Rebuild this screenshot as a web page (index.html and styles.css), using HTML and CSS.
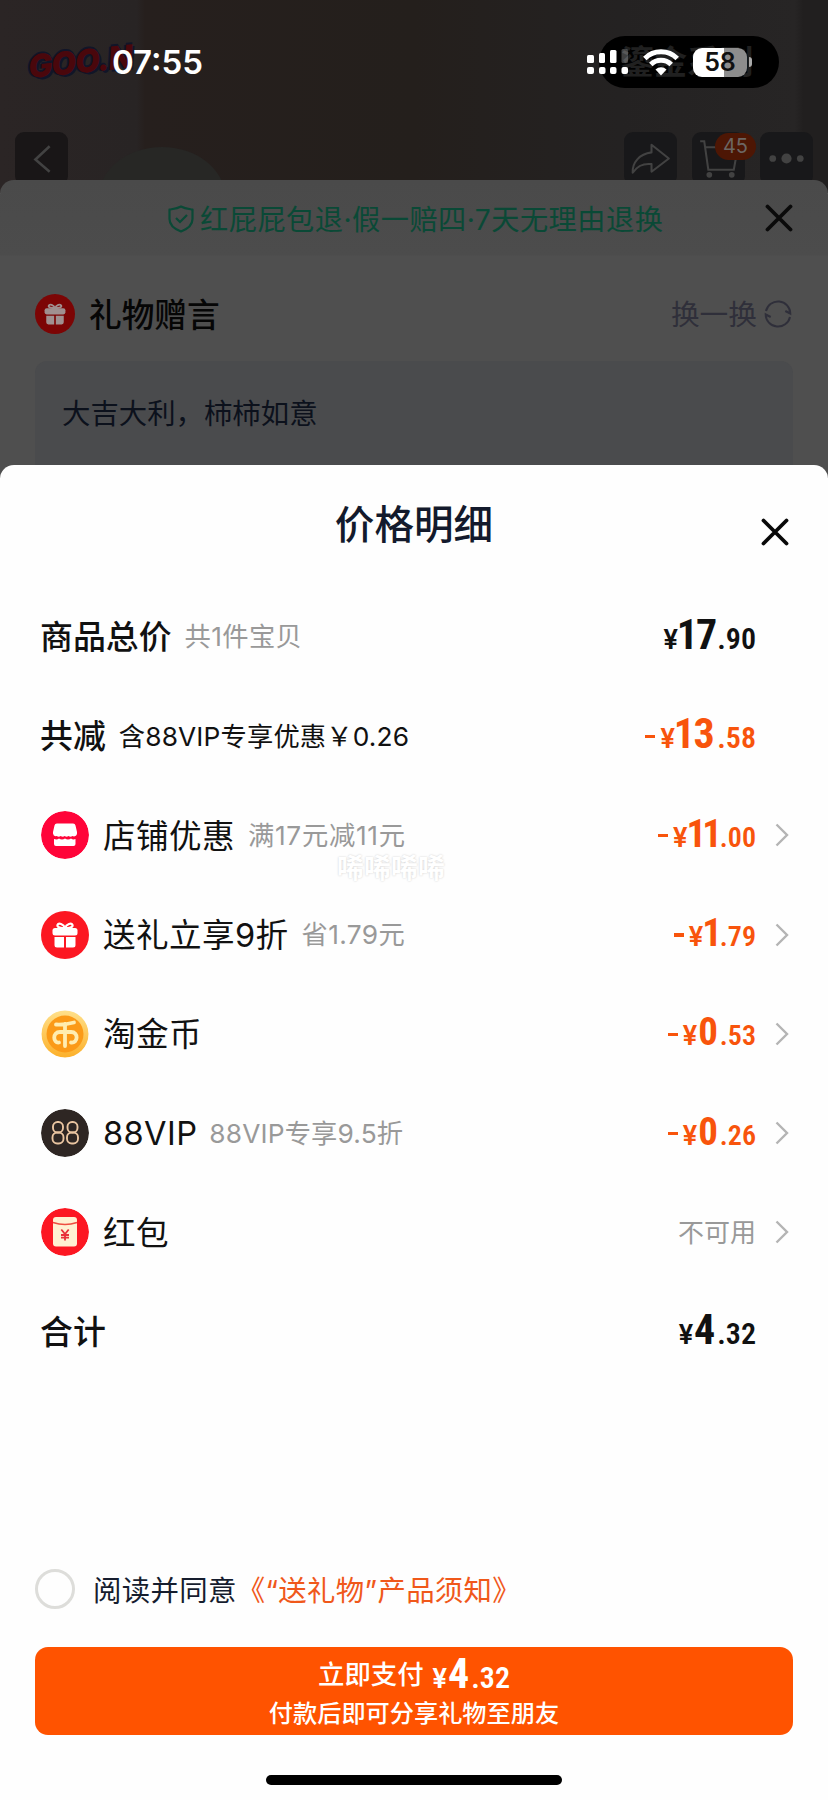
FILE: index.html
```html
<!DOCTYPE html>
<html lang="zh-CN">
<head>
<meta charset="utf-8">
<title>价格明细</title>
<link rel="stylesheet" href="styles.css">
</head>
<body>
<svg class="defs" width="0" height="0">
  <symbol id="gift" viewBox="0 0 48 48">
    <g fill="currentColor">
      <rect x="11.500" y="17" width="25" height="7.500" rx="2.500"/>
      <path d="M13.500 26H23v10.500h-7a2.500 2.500 0 0 1-2.500-2.500zM25 26h9.500v8a2.500 2.500 0 0 1-2.500 2.500h-7z"/>
    </g>
    <path d="M24 17c-1.500-4-6.500-5.500-7.500-3s4 3 7.500 3c3.500 0 8.500-.5 7.500-3S25.500 13 24 17z" fill="none" stroke="currentColor" stroke-width="2.200"/>
  </symbol>
  <symbol id="arrow" viewBox="0 0 14 24"><path d="M1.500 1.500 12 12 1.500 22.500" fill="none" stroke="#b4b4b4" stroke-width="2.400"/></symbol>
  <symbol id="cross" viewBox="0 0 28 28"><path d="M2.500 2.500l23 23M25.500 2.500l-23 23" fill="none" stroke="currentColor" stroke-width="3.800" stroke-linecap="round"/></symbol>
</svg>
<div class="screen">
  <header class="hero">
    <div class="brand">GOO.N</div>
    <div class="island"></div>
    <div class="hero-label">鎏金系列</div>
    <div class="status">
      <time class="clock">07:55</time>
      <div class="indicators">
        <svg class="signal" viewBox="0 0 42 26" width="42" height="26"><g fill="#fff"><rect x="0" y="6" width="7" height="8" rx="1.500"/><rect x="12" y="4" width="6" height="10" rx="1.500"/><rect x="23" y="1" width="6.500" height="13" rx="1.500"/><rect x="34.500" y="0" width="6.500" height="14" rx="1.500" opacity=".25"/><rect x="0" y="18" width="7" height="7" rx="2"/><rect x="12" y="18" width="6.500" height="7" rx="2"/><rect x="23" y="18" width="6.500" height="7" rx="2"/><rect x="34.500" y="18" width="6.500" height="7" rx="2"/></g></svg>
        <svg class="wifi" viewBox="0 0 36 27" width="36" height="27"><g fill="none" stroke="#fff" stroke-width="5"><path d="M1.800 9.500a23 23 0 0 1 32.400 0"/><path d="M7.800 15.500a14.500 14.500 0 0 1 20.400 0"/></g><path d="M18 26.500l-5.500-6a8 8 0 0 1 11 0z" fill="#fff"/></svg>
        <div class="battery"><span>58</span></div>
        <i class="battery-tip"></i>
      </div>
    </div>
    <div class="dome"></div>
    <nav class="tools">
      <div class="tool back"><svg viewBox="0 0 52 52"><path d="M34 14 20 27l14 12" fill="none" stroke="currentColor" stroke-width="2.500"/></svg></div>
      <div class="tool"><svg viewBox="0 0 52 52"><path d="M27 12.500 44 26 27 39v-7.500c-9-1-14 2-18.500 8.500C8 30 15 21.500 27 20z" fill="none" stroke="currentColor" stroke-width="2" stroke-linejoin="round"/></svg></div>
      <div class="tool"><svg viewBox="0 0 52 52"><g fill="none" stroke="currentColor" stroke-width="2"><path d="M8 9h4l4 28h25l4-22H13"/></g><circle cx="17" cy="42" r="2.800" fill="currentColor"/><circle cx="39" cy="42" r="2.800" fill="currentColor"/></svg><b class="count">45</b></div>
      <div class="tool"><svg viewBox="0 0 52 52"><g fill="currentColor"><circle cx="12.500" cy="26" r="3.300"/><circle cx="26" cy="26" r="5"/><circle cx="39.500" cy="26" r="3.300"/></g></svg></div>
    </nav>
  </header>
  <section class="order">
    <div class="promise">
      <svg viewBox="0 0 26 28" width="26" height="28"><path d="M13 1.500C9 4 5 4 1.500 4.500V14c0 6 5 10 11.500 12.500C19.500 24 24.500 20 24.500 14V4.500C21 4 17 4 13 1.500z" fill="none" stroke="currentColor" stroke-width="2.200" stroke-linejoin="round"/><path d="M8 13l4 4 7-7" fill="none" stroke="currentColor" stroke-width="2.200"/></svg>
      <span>红屁屁包退·假一赔四·7天无理由退换</span>
      <svg class="promise-close"><use href="#cross"/></svg>
    </div>
    <div class="wish-head">
      <svg class="wish-icon"><use href="#gift"/></svg>
      <h2>礼物赠言</h2>
      <span class="swap">换一换</span>
      <svg viewBox="0 0 28 28" width="28" height="28" class="refresh"><g fill="none" stroke="currentColor" stroke-width="2"><path d="M2 11A12.300 12.300 0 0 1 26.300 13.500l-5-2.500M26 17A12.300 12.300 0 0 1 1.700 14.500l5 2.500"/></g></svg>
    </div>
    <div class="wish">大吉大利，柿柿如意</div>
  </section>
  <main class="sheet">
    <div class="sheet-head"><h1>价格明细</h1><svg class="close"><use href="#cross"/></svg></div>
    <div class="rows">
      <div class="row"><strong>商品总价</strong><small>共1件宝贝</small><div class="price dark"><i>¥</i><b class="tight">17</b><em>.90</em></div></div>
      <div class="row"><strong>共减</strong><small class="black">含88VIP专享优惠￥0.26</small><div class="price"><u></u><i>¥</i><b class="tight cut">13</b><em>.58</em></div></div>
      <div class="row"><svg class="icon" viewBox="0 0 48 48"><circle cx="24" cy="24" r="24" fill="#ff0439"/><path d="M16 12.500h16a2.500 2.500 0 0 1 2.500 2L36 21v1.500a3 3 0 0 1-4.500 2.500q-2 1.500-4 0-2 1.500-3.800 0-2 1.500-4 0-2 1.500-4 0a3 3 0 0 1-3.700-2.500V21l1.500-6.500a2.500 2.500 0 0 1 2.500-2zM13 28q3 1 5-.5 3 2 6 0 3 2 6 0 2 1.500 4.500.5v5a2 2 0 0 1-2 2H15a2 2 0 0 1-2-2z" fill="#fff"/></svg><span>店铺优惠</span><small class="wide">满17元减11元</small><div class="price disc"><u></u><i>¥</i><b class="ones">11</b><em>.00</em></div><svg class="go"><use href="#arrow"/></svg></div>
      <div class="row"><svg class="icon gift"><use href="#gift"/></svg><span>送礼立享9折</span><small>省1.79元</small><div class="price disc"><u></u><i>¥</i><b class="ones">1</b><em>.79</em></div><svg class="go"><use href="#arrow"/></svg></div>
      <div class="row"><svg class="icon" viewBox="0 0 48 48"><defs><linearGradient id="rim" x2="0" y2="1"><stop stop-color="#ffe08a"/><stop offset="1" stop-color="#fcb02a"/></linearGradient></defs><circle cx="24" cy="24" r="23.500" fill="url(#rim)"/><circle cx="24" cy="24" r="18.500" fill="#fb9a17"/><g fill="none" stroke="#ffedb0" stroke-width="3.800" stroke-linecap="round" stroke-linejoin="round"><path d="M15 14.500q9 .5 18-2M24 14v22M18 32.500c-6 1-7-10.500 1-10.500h11c8 0 7 11.500 0 10.500"/></g></svg><span>淘金币</span><div class="price disc"><u></u><i>¥</i><b>0</b><em>.53</em></div><svg class="go"><use href="#arrow"/></svg></div>
      <div class="row"><svg class="icon" viewBox="0 0 48 48"><circle cx="24" cy="24" r="24" fill="#2e2623"/><g fill="none" stroke="#e9c4a0" stroke-width="1.900"><rect x="12" y="13" width="10" height="10.500" rx="4.500"/><rect x="11.500" y="23.500" width="11" height="11" rx="4.700"/><rect x="26.500" y="13" width="10" height="10.500" rx="4.500"/><rect x="26" y="23.500" width="11" height="11" rx="4.700"/></g></svg><span class="vip">88VIP</span><small class="vip-note">88VIP专享9.5折</small><div class="price disc"><u></u><i>¥</i><b>0</b><em>.26</em></div><svg class="go"><use href="#arrow"/></svg></div>
      <div class="row"><svg class="icon" viewBox="0 0 48 48"><circle cx="24" cy="24" r="24" fill="#fc1722"/><rect x="12" y="9" width="24" height="29.500" rx="3" fill="#fff0d2"/><path d="M12 14.500q12 4 24 0" fill="none" stroke="#ee4c40" stroke-width="1.500"/><path d="M20.300 21.500l3.700 4.500 3.700-4.500M24 25.500v7M20 27h8M20 29.700h8" stroke="#e8303a" stroke-width="1.800" fill="none"/></svg><span>红包</span><div class="none">不可用</div><svg class="go"><use href="#arrow"/></svg></div>
      <div class="row"><strong>合计</strong><div class="price dark"><i>¥</i><b>4</b><em>.32</em></div></div>
    </div>
    <div class="watermark">唏唏唏唏</div>
    <div class="agree"><i class="radio"></i><span>阅读并同意</span><a>《“送礼物”产品须知》</a></div>
    <button class="pay"><div class="pay-main"><span>立即支付</span><div class="price white"><i>¥</i><b>4</b><em>.32</em></div></div><div class="pay-sub">付款后即可分享礼物至朋友</div></button>
    <div class="home"></div>
  </main>
</div>
</body>
</html>
```
FILE: styles.css
```css
* { box-sizing: border-box; margin: 0; padding: 0; }
body { background: #fff; font-family: Inter, "Noto Sans CJK SC", sans-serif; color: #111; }
.defs { position: absolute; }
i, em { font-style: normal; }
u { text-decoration: none; }
svg { flex: none; display: block; }
.screen { width: 828px; height: 1800px; display: flex; flex-direction: column; overflow: hidden; white-space: nowrap; }

/* dimmed product page */
.hero { position: relative; height: 193px; margin-bottom: -13px; background: linear-gradient(90deg, #2b2525 0, #282424 16.500%, #261f1d 17.500%, #241f1c 50%, #242222 75%, #272525 96%, #211f1f 97%); overflow: hidden; }
.brand { position: absolute; left: 28px; top: 42px; font: italic 900 32px Inter, sans-serif; letter-spacing: -1px; color: #4a070c; transform: rotate(-6deg); text-shadow: 2px 2px #111528, -2px 0 #111528, 0 -2px #111528; }
.island { position: absolute; left: 599px; top: 36px; width: 180px; height: 52px; border-radius: 26px; background: #000; }
.hero-label { position: absolute; left: 621px; top: 42px; font-size: 33px; line-height: 40px; font-weight: 700; color: #202020; }
.status { position: relative; height: 124px; padding: 0 76px 0 112px; display: flex; justify-content: space-between; align-items: center; }
.clock { color: #fff; font-size: 33px; font-weight: 600; }
.indicators { display: flex; align-items: center; }
.signal { margin-right: 14px; }
.wifi { margin-right: 14px; }
.battery { width: 54px; height: 29px; border-radius: 9px; background: linear-gradient(90deg, #fff 58%, #8d8d8d 58%); text-align: center; font-size: 25px; line-height: 29px; font-weight: 600; color: #111; }
.battery-tip { width: 3px; height: 10px; margin-left: 2px; background: #aaa; border-radius: 0 3px 3px 0; }
.dome { position: absolute; left: 99px; top: 147px; width: 126px; height: 100px; border-radius: 50%; background: #272725; }
.tools { position: relative; display: flex; gap: 15px; padding: 8px 15px; }
.tool { position: relative; width: 53px; height: 53px; border-radius: 9px; background: #18181a; color: #424242; }
.back { margin-right: auto; background: #191617; }
.count { position: absolute; left: 23px; top: 1px; width: 41px; height: 27px; border-radius: 14px; background: #4d1604; color: #6c6663; font-size: 20px; line-height: 27px; text-align: center; font-weight: 400; }

.order { position: relative; height: 298px; margin-bottom: -13px; border-radius: 14px 14px 0 0; background: linear-gradient(#4a4a4a 0, #4c4c4c 75px, #4f4f4f 76px); }
.promise { height: 78px; padding-left: 168px; display: flex; align-items: center; gap: 6px; color: #0a4936; font-size: 28.200px; letter-spacing: .5px; }
.promise span { position: relative; top: -2px; }
.promise-close { width: 28px; height: 28px; margin: 0 35px 2px auto; color: #0a0a0a; }
.wish-head { height: 113px; padding: 0 36px 0 35px; display: flex; align-items: center; margin-top: -1px; }
.wish-icon { width: 40px; height: 40px; border-radius: 50%; background: #7c0505; color: #a09090; margin-right: 14px; }
.wish-head h2 { font-size: 32.700px; line-height: 48px; margin-top: 2px; font-weight: 500; color: #060606; }
.swap { margin-left: auto; font-size: 28.700px; color: #2f2f3a; margin-right: 7px; position: relative; top: -1px; }
.refresh { color: #2f2f3a; }
.wish { margin: -9px 35px 0; height: 117px; padding-left: 27px; border-radius: 12px; background: #4a4b4d; color: #0c111c; font-size: 28.400px; line-height: 106px; }

/* price sheet */
.sheet { position: relative; height: 1335px; border-radius: 14px 14px 0 0; background: #fefefe; display: flex; flex-direction: column; }
.sheet-head { height: 122px; position: relative; text-align: center; }
.sheet-head h1 { font-size: 39.600px; line-height: 121px; font-weight: 500; color: #131a2c; }
.close { position: absolute; left: 760.500px; top: 53px; width: 28px; height: 28px; color: #080808; }
.rows { padding: 0 0 0 41px; }
.row { height: 99.300px; display: flex; align-items: center; position: relative; padding-right: 72px; font-size: 32.600px; }
.row > span, .row > strong { padding-bottom: 4px; }
.row > small, .none { padding-bottom: 4px; }
.row > strong { font-weight: 500; font-size: 32.900px; margin-left: -1px; }
.row > span { margin-left: -1px; letter-spacing: .4px; }
.row > .vip { padding-bottom: 0; }
.row > small { font-size: 26.300px; letter-spacing: .35px; color: #999; margin-left: 13px; }
.row > .black { color: #111; letter-spacing: .15px; padding-bottom: 3px; }
.row > .wide { letter-spacing: .7px; }
.row > .vip-note { letter-spacing: .15px; margin-left: 12px; }
.icon { width: 48px; height: 48px; margin-right: 15px; border-radius: 50%; }
.gift { background: #fc1722; color: #fff; }
.go { position: absolute; right: 39px; width: 14px; height: 24px; }
.none { margin-left: auto; font-size: 26px; color: #999; }
.price { margin-left: auto; display: flex; align-items: baseline; color: #f8540c; font-family: Roboto, sans-serif; line-height: 50px; padding-top: 1px; }
.price u { width: 10px; height: 3.500px; background: currentColor; align-self: center; margin: 0 5px 0 0; }
.price i { font-size: 27px; font-weight: 600; }
.price b { font-size: 42px; font-weight: 700; font-stretch: 75%; margin: 0 2px 0 1px; }
.price em { font-size: 30px; font-weight: 600; font-stretch: 87.500%; }
.price .tight { letter-spacing: -2px; margin: 0 2px 0 -1px; }
.price .cut { letter-spacing: -1.500px; margin-right: 4px; }
.price .ones { letter-spacing: -4px; margin: 0 2px 0 -1px; }
.disc b { font-size: 39px; }
.disc em { font-size: 28px; }
.dark { color: #111; }
.watermark { position: absolute; left: 337px; top: 387px; font-size: 27px; line-height: 34px; font-weight: 700; color: #fff; text-shadow: 0 0 2px #ccc; }
.agree { height: 76px; margin-top: 169.400px; padding-left: 35px; display: flex; align-items: center; font-size: 28.400px; letter-spacing: .35px; color: #161d2e; margin-bottom: 20px; }
.agree a { color: #f0581a; }
.agree span, .agree a { padding-bottom: 1px; }
.radio { width: 40px; height: 40px; border: 3px solid #ddddda; border-radius: 50%; margin-right: 18px; }
.pay { margin: 0 35px; height: 88px; border: 0; border-radius: 13px; background: #ff5300; color: #fff; font-family: inherit; display: flex; flex-direction: column; align-items: center; }
.pay-main { display: flex; align-items: center; height: 54px; gap: 9px; font-size: 26.400px; font-weight: 500; }
.pay-main span { padding-bottom: 2px; }
.pay-sub { font-size: 24.200px; line-height: 26px; font-weight: 500; }
.price.white { color: #fff; margin: 0; padding-top: 5px; }
.home { width: 296px; height: 10px; margin: 40px auto 0; border-radius: 5px; background: #000; }
```
